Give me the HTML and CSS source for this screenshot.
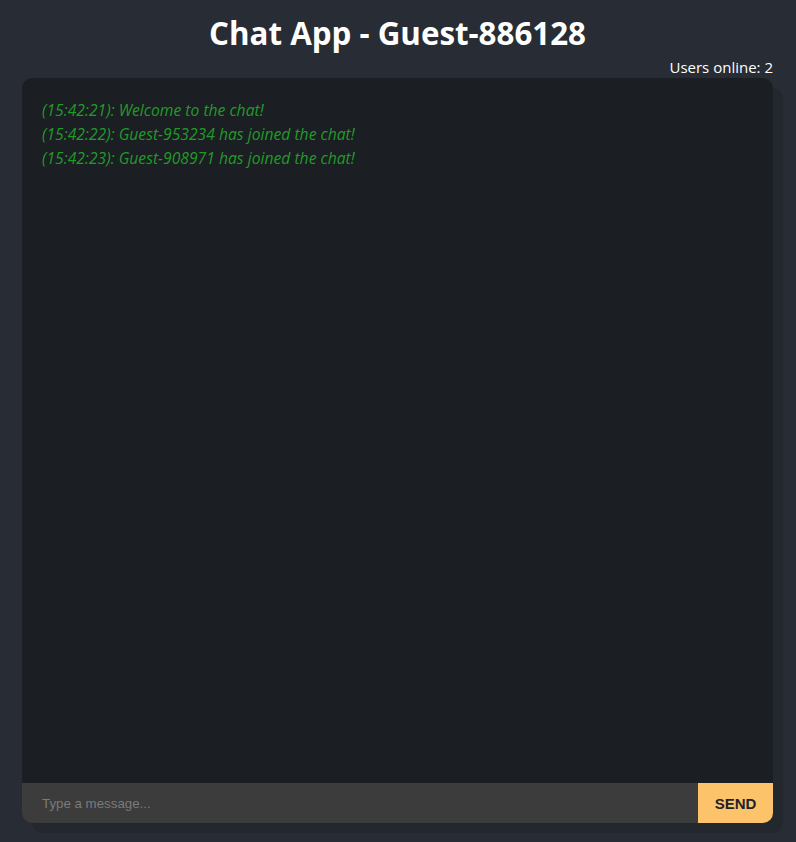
FILE: index.html
```html
<!DOCTYPE html>
<html>
<head>
<meta charset="utf-8">
<link rel="stylesheet" href="styles.css">
</head>
<body>
<div class="app">
  <h1 class="title">Chat App - Guest-886128</h1>
  <div class="online">Users online: 2</div>
  <div class="chat">
    <div class="messages">
      <div class="msg">(15:42:21): Welcome to the chat!</div>
      <div class="msg">(15:42:22): Guest-953234 has joined the chat!</div>
      <div class="msg">(15:42:23): Guest-908971 has joined the chat!</div>
    </div>
    <form class="composer">
      <input class="input" type="text" placeholder="Type a message..." autofocus>
      <button class="send" type="button">SEND</button>
    </form>
  </div>
</div>
</body>
</html>
```
FILE: styles.css
```css
html, body {
  margin: 0;
  padding: 0;
  background: #282c34;
  height: 100%;
}
body {
  font-family: "Open Sans", "Noto Sans", sans-serif;
  color: #ffffff;
}
.app {
  display: flex;
  flex-direction: column;
  height: 842px;
  box-sizing: border-box;
  padding: 0 23px 19px 22px;
}
.title {
  margin: 13px 0 0;
  text-align: center;
  font-size: 31.3px;
  font-weight: 700;
  line-height: 40px;
}
.online {
  text-align: right;
  font-size: 15px;
  line-height: 20px;
  margin-top: 4px;
  margin-bottom: 1px;
}
.chat {
  flex: 1;
  display: flex;
  flex-direction: column;
  background: #1b1e22;
  border-radius: 10px;
  box-shadow: 10px 10px 0 rgba(0, 0, 0, 0.1);
  overflow: hidden;
}
.messages {
  flex: 1;
  padding: 20px 20px;
}
.msg {
  font-style: italic;
  font-size: 15.7px;
  line-height: 24px;
  color: #229a2a;
}
.composer {
  display: flex;
  height: 40px;
  margin: 0;
}
.input {
  flex: 1;
  border: none;
  outline: none;
  background: #3c3c3c;
  color: #ffffff;
  padding: 0 20px;
  font-family: "Liberation Sans", Arial, sans-serif;
  font-size: 13.3px;
}
.input::placeholder {
  color: #7a7a7a;
}
.send {
  width: 75px;
  border: none;
  background: #fcc36b;
  color: #1f2328;
  font-family: "Liberation Sans", Arial, sans-serif;
  font-weight: 700;
  font-size: 15px;
  padding: 0;
}
```
